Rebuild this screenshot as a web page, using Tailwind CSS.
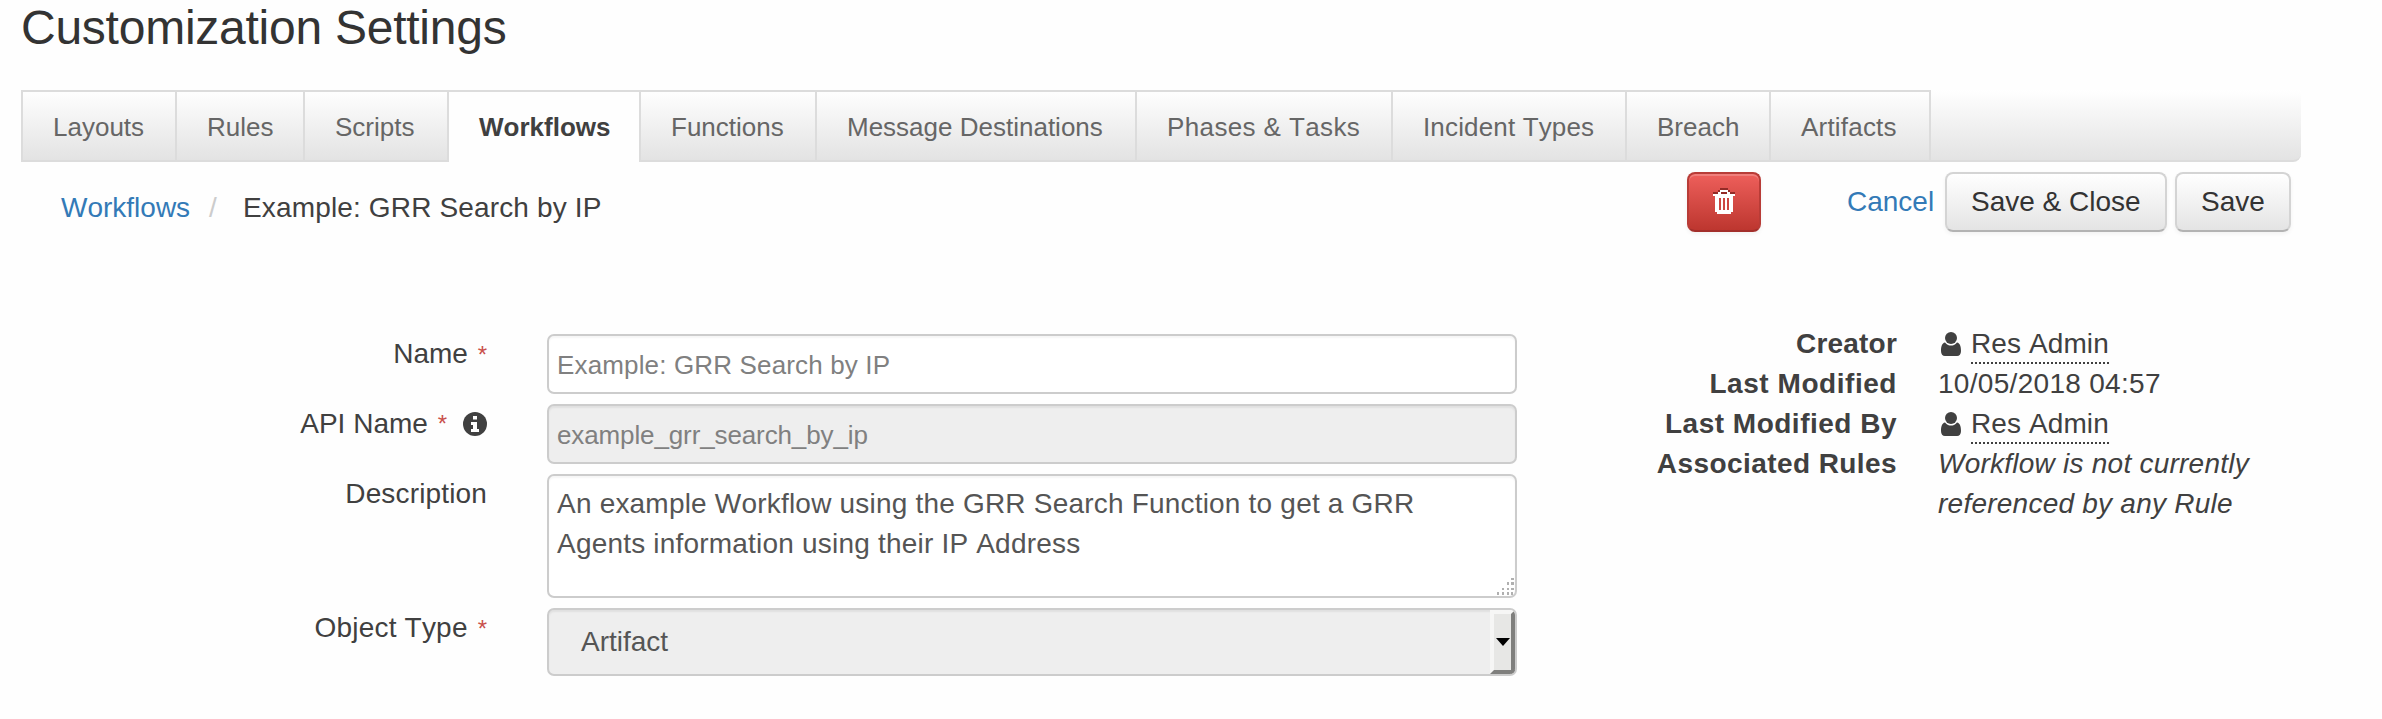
<!DOCTYPE html>
<html lang="en">
<head>
<meta charset="utf-8">
<title>Customization Settings</title>
<script src="https://cdn.jsdelivr.net/npm/@tailwindcss/browser@4"></script>
</head>
<body class="w-[2382px] h-[719px] overflow-hidden bg-[#fefefe] font-['Liberation_Sans',Arial,sans-serif] text-[28px] leading-[40px] text-[#404040] [font-kerning:none]">
<h1 class="h-[90px] pl-[21px] text-[48px] leading-[55px] text-[#333] tracking-[-0.25px]">Customization Settings</h1>

<nav class="ml-[21px] w-[2280px] h-[72px] flex rounded-br-[8px] border-b-2 border-[#dcdcdc] bg-linear-to-b from-white to-[#e3e3e3] text-[26px] leading-[70px] text-[#666] whitespace-nowrap">
  <a class="h-[70px] w-[156px] pl-[30px] border-x-2 border-t-2 border-[#dcdcdc]">Layouts</a>
  <a class="h-[70px] w-[128px] pl-[30px] border-r-2 border-t-2 border-[#dcdcdc]">Rules</a>
  <a class="h-[70px] w-[144px] pl-[30px] border-r-2 border-t-2 border-[#dcdcdc]">Scripts</a>
  <a class="h-[72px] w-[192px] pl-[30px] border-r-2 border-t-2 border-t-[#dcdcdc] border-r-[#dcdcdc] bg-[#fefefe] font-bold text-[#404040]">Workflows</a>
  <a class="h-[70px] w-[176px] pl-[30px] border-r-2 border-t-2 border-[#dcdcdc]">Functions</a>
  <a class="h-[70px] w-[320px] pl-[30px] border-r-2 border-t-2 border-[#dcdcdc]">Message Destinations</a>
  <a class="h-[70px] w-[256px] pl-[30px] border-r-2 border-t-2 border-[#dcdcdc] tracking-[0.38px]">Phases &amp; Tasks</a>
  <a class="h-[70px] w-[234px] pl-[30px] border-r-2 border-t-2 border-[#dcdcdc] tracking-[0.15px]">Incident Types</a>
  <a class="h-[70px] w-[144px] pl-[30px] border-r-2 border-t-2 border-[#dcdcdc]">Breach</a>
  <a class="h-[70px] w-[160px] pl-[30px] border-r-2 border-t-2 border-[#dcdcdc] tracking-[0.2px]">Artifacts</a>
</nav>

<div class="mt-[10px] h-[60px] w-[2291px] flex">
  <div class="pl-[61px] pt-[16px] flex whitespace-nowrap">
    <a class="w-[148px] text-[#337ab7]">Workflows</a>
    <span class="w-[34px] text-[#ccc]">/</span>
    <span class="tracking-[0.15px]">Example: GRR Search by IP</span>
  </div>
  <div class="ml-auto flex leading-[60px] whitespace-nowrap">
    <button class="w-[74px] h-[60px] mr-[86px] flex justify-center pt-[14px] rounded-[8px] border-2 border-[#b83c37] border-b-[#a32f2b] bg-linear-to-b from-[#ee5f5b] to-[#bd362f] shadow-[inset_0_2px_0_rgba(255,255,255,0.2),0_2px_4px_rgba(0,0,0,0.05)]">
      <svg class="w-[22px] h-[26px]" viewBox="0 0 22 26" shape-rendering="crispEdges"><path fill="#932b27" d="M7 0h8v2H7zM5 2h2v2H5zM15 2h2v2h-2zM0 4h22v2H0z"/><path fill="#fff" d="M7 2h8v2h2v2h5v2h-2v18H2V8H0V6h5V4h2z"/><path fill="#932b27" d="M8 4h6v2H8z"/><path fill="#cc4742" d="M6 10h2v12H6zM10 10h2v12h-2zM14 10h2v12h-2zM2 24h2v2H2zM18 24h2v2h-2z"/></svg>
    </button>
    <a class="w-[98px] text-[#337ab7]">Cancel</a>
    <button class="w-[222px] h-[60px] mr-[8px] pl-[24px] text-left leading-[56px] text-[#333] rounded-[8px] border-2 border-[#d4d4d4] border-b-[#b3b3b3] bg-linear-to-b from-white to-[#e4e4e4] shadow-[0_2px_4px_rgba(0,0,0,0.05)]">Save &amp; Close</button>
    <button class="w-[116px] h-[60px] pl-[24px] text-left leading-[56px] text-[#333] rounded-[8px] border-2 border-[#d4d4d4] border-b-[#b3b3b3] bg-linear-to-b from-white to-[#e4e4e4] shadow-[0_2px_4px_rgba(0,0,0,0.05)]">Save</button>
  </div>
</div>

<main class="mt-[92px] flex whitespace-nowrap">
  <form class="w-[1517px] pt-[10px] flex flex-col gap-[10px]">
    <div class="flex justify-end h-[60px]">
      <label class="mr-[60px]">Name <span class="ml-[2px] text-[24px] text-[#c9504c]">*</span></label>
      <div class="w-[970px] pl-[8px] rounded-[7px] border-2 border-[#ccc] bg-white shadow-[inset_0_2px_2px_rgba(0,0,0,0.04)] text-[26px] leading-[58px] text-[#808080] tracking-[0.15px]">Example: GRR Search by IP</div>
    </div>
    <div class="flex justify-end h-[60px]">
      <label class="mr-[60px] flex">API Name&nbsp;<span class="ml-[2px] text-[24px] text-[#c9504c]">*</span>
        <svg class="w-[24px] h-[24px] ml-[16px] mt-[8px]" viewBox="0 0 24 24"><circle cx="12" cy="12" r="12" fill="#404040"/><path fill="#fff" d="M10 4h4v3.5h-4zM8 10h6v7h2v3H8v-3h2v-4H8z"/></svg>
      </label>
      <div class="w-[970px] pl-[8px] rounded-[7px] border-2 border-[#ccc] bg-[#eee] shadow-[inset_0_2px_2px_rgba(0,0,0,0.06)] text-[26px] leading-[58px] text-[#808080] tracking-[-0.12px]">example_grr_search_by_ip</div>
    </div>
    <div class="flex justify-end h-[124px]">
      <label class="mr-[60px] tracking-[0.15px]">Description</label>
      <div class="relative w-[970px] pl-[8px] pt-[8px] rounded-[7px] border-2 border-[#ccc] bg-white shadow-[inset_0_2px_2px_rgba(0,0,0,0.04)] text-[#555] tracking-[0.2px]">An example Workflow using the GRR Search Function to get a GRR<br>Agents information using their IP Address
        <svg class="absolute right-0 bottom-0 w-[18px] h-[18px]" viewBox="0 0 18 18" shape-rendering="crispEdges" fill="#b0b0b0"><path d="M14 0h3v2h-3zM10 4h2v3h-2zM14 4h3v3h-3zM5 10h2v2H5zM10 10h2v2h-2zM14 10h3v2h-3zM0 14h2v3H0zM5 14h2v3H5zM10 14h2v3h-2zM14 14h2v3h-2z"/></svg>
      </div>
    </div>
    <div class="flex justify-end h-[68px]">
      <label class="mr-[60px] tracking-[0.2px]">Object Type <span class="ml-[2px] tracking-normal text-[24px] text-[#c9504c]">*</span></label>
      <div class="w-[970px] pl-[32px] flex justify-between overflow-hidden rounded-[7px] border-2 border-[#ccc] bg-[#eee] shadow-[inset_0_2px_2px_rgba(0,0,0,0.06)] text-[#555] leading-[64px]">Artifact
        <span class="w-[25px] h-[64px] flex items-center justify-center border-4 border-t-[#f6f6f5] border-l-[#f6f6f5] border-r-[#7f7f7d] border-b-[#7f7f7d] bg-[#e7e7e5]"><svg class="w-[14px] h-[8px] shrink-0" viewBox="0 0 14 8"><path d="M0 0h14L7 8z"/></svg></span>
      </div>
    </div>
  </form>

  <dl class="ml-[100px] grid grid-cols-[280px_400px] auto-rows-[40px] gap-x-[41px] h-fit">
    <dt class="text-right font-bold tracking-[0.2px]">Creator</dt>
    <dd class="flex"><svg class="w-[20px] h-[24px] mx-[3px] mt-[8px] mr-[10px]" viewBox="0 0 20 24" fill="#404040"><ellipse cx="10" cy="6" rx="6" ry="6"/><path d="M4 10.500C6 13 8 13.500 10 13.500s4-.5 6-3c3 .5 4 4 4 8.500 0 3-1.500 5-4 5H4c-2.500 0-4-2-4-5 0-4.500 1-8 4-8.500z"/></svg><span class="h-[40px] border-b-2 border-dotted border-[#404040] tracking-[0.1px]">Res Admin</span></dd>
    <dt class="text-right font-bold tracking-[0.55px]">Last Modified</dt>
    <dd class="tracking-[0.3px]">10/05/2018 04:57</dd>
    <dt class="text-right font-bold tracking-[0.5px]">Last Modified By</dt>
    <dd class="flex"><svg class="w-[20px] h-[24px] mx-[3px] mt-[8px] mr-[10px]" viewBox="0 0 20 24" fill="#404040"><ellipse cx="10" cy="6" rx="6" ry="6"/><path d="M4 10.500C6 13 8 13.500 10 13.500s4-.5 6-3c3 .5 4 4 4 8.500 0 3-1.500 5-4 5H4c-2.500 0-4-2-4-5 0-4.500 1-8 4-8.500z"/></svg><span class="h-[40px] border-b-2 border-dotted border-[#404040] tracking-[0.1px]">Res Admin</span></dd>
    <dt class="text-right font-bold tracking-[0.42px]">Associated Rules</dt>
    <dd class="italic tracking-[0.24px]">Workflow is not currently<br>referenced by any Rule</dd>
  </dl>
</main>
</body>
</html>
